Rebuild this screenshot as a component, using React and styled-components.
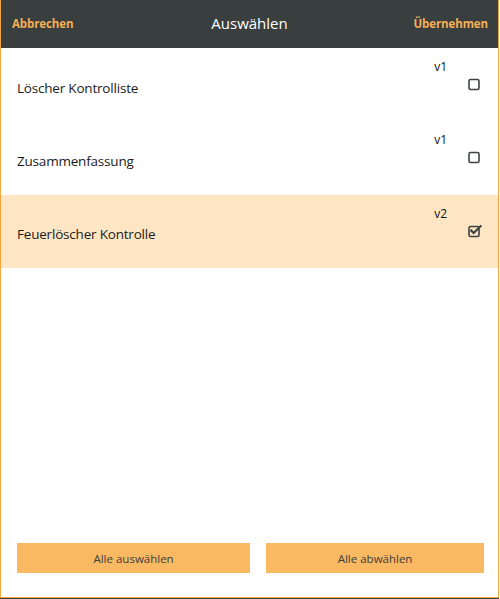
import React, { useState } from "react";
import styled, { createGlobalStyle } from "styled-components";

const GlobalStyle = createGlobalStyle`
  html, body {
    margin: 0;
    padding: 0;
    background: #ffffff;
  }
  body {
    font-family: "Open Sans", "Noto Sans", sans-serif;
  }
`;

const Window = styled.div`
  width: 499px;
  height: 599px;
  box-sizing: border-box;
  border-bottom: 1px solid #3a3f3f;
`;

const Frame = styled.div`
  height: 598px;
  box-sizing: border-box;
  border-left: 1px solid #f4a540;
  border-right: 1px solid #f4a540;
  border-bottom: 1px solid #f4a540;
  display: flex;
  flex-direction: column;
`;

const Header = styled.header`
  height: 48px;
  flex-shrink: 0;
  background-color: #393e3e;
  display: flex;
  align-items: center;
  justify-content: space-between;
  padding: 0 10px 0 11px;
  position: relative;
`;

const HeaderButton = styled.button`
  background: none;
  border: none;
  padding: 0;
  cursor: pointer;
  color: #f5ae55;
  font-family: "Open Sans", sans-serif;
  font-weight: 700;
  font-size: 11.5px;
  letter-spacing: -0.1px;
  margin-top: -2px;
`;

const Title = styled.h1`
  position: absolute;
  left: 0;
  right: 0;
  text-align: center;
  margin: -2px 0 0;
  pointer-events: none;
  color: #ffffff;
  font-weight: 400;
  font-size: 15px;
`;

const List = styled.ul`
  list-style: none;
  margin: 0;
  padding: 0;
  flex: 1;
`;

const Row = styled.li`
  height: 73.3px;
  display: flex;
  align-items: stretch;
  padding: 0 16px 0 16px;
  background-color: ${(p) => (p.$selected ? "#fee6c4" : "#ffffff")};
  cursor: pointer;
`;

const Label = styled.span`
  flex: 1;
  align-self: center;
  padding-top: 6px;
  color: #1b1b1b;
  font-size: 13.5px;
  letter-spacing: -0.2px;
`;

const Meta = styled.div`
  display: flex;
  flex-direction: column;
  align-items: flex-end;
  padding-top: 11px;
`;

const Version = styled.span`
  color: #111111;
  font-size: 12px;
  line-height: 16px;
  margin-right: 35px;
`;

const Box = styled.svg`
  display: block;
  margin-top: 3px;
  margin-right: 0;
`;

const Footer = styled.div`
  display: flex;
  gap: 16px;
  padding: 0 14px 24px 16px;
`;

const ActionButton = styled.button`
  flex: ${(p) => p.$grow};
  height: 30px;
  border: none;
  background-color: #f9b862;
  color: #3d3d3d;
  font-family: "Open Sans", sans-serif;
  font-size: 11.5px;
  cursor: pointer;
`;

const Checkbox = ({ checked }) => (
  <Box width="14" height="13" viewBox="0 0 14 13">
    <rect
      x="1"
      y="1.5"
      width="10"
      height="10"
      rx="1.6"
      fill="none"
      stroke="#3d4343"
      strokeWidth="1.6"
    />
    {checked && (
      <path
        d="M3.2 5.6 L5.7 8 L12.6 1.2"
        fill="none"
        stroke="#3d4343"
        strokeWidth="2.2"
        strokeLinecap="square"
      />
    )}
  </Box>
);

const items = [
  { id: 1, name: "Löscher Kontrolliste", version: "v1" },
  { id: 2, name: "Zusammenfassung", version: "v1" },
  { id: 3, name: "Feuerlöscher Kontrolle", version: "v2" },
];

const App = () => {
  const [selected, setSelected] = useState([3]);

  const toggle = (id) =>
    setSelected((s) => (s.includes(id) ? s.filter((x) => x !== id) : [...s, id]));

  return (
    <>
      <GlobalStyle />
      <Window>
        <Frame>
          <Header>
            <HeaderButton>Abbrechen</HeaderButton>
            <Title>Auswählen</Title>
            <HeaderButton>Übernehmen</HeaderButton>
          </Header>
          <List>
            {items.map((item) => {
              const on = selected.includes(item.id);
              return (
                <Row key={item.id} $selected={on} onClick={() => toggle(item.id)}>
                  <Label>{item.name}</Label>
                  <Meta>
                    <Version>{item.version}</Version>
                    <Checkbox checked={on} />
                  </Meta>
                </Row>
              );
            })}
          </List>
          <Footer>
            <ActionButton $grow={233} onClick={() => setSelected(items.map((i) => i.id))}>
              Alle auswählen
            </ActionButton>
            <ActionButton $grow={217} onClick={() => setSelected([])}>
              Alle abwählen
            </ActionButton>
          </Footer>
        </Frame>
      </Window>
    </>
  );
};

export default App;
